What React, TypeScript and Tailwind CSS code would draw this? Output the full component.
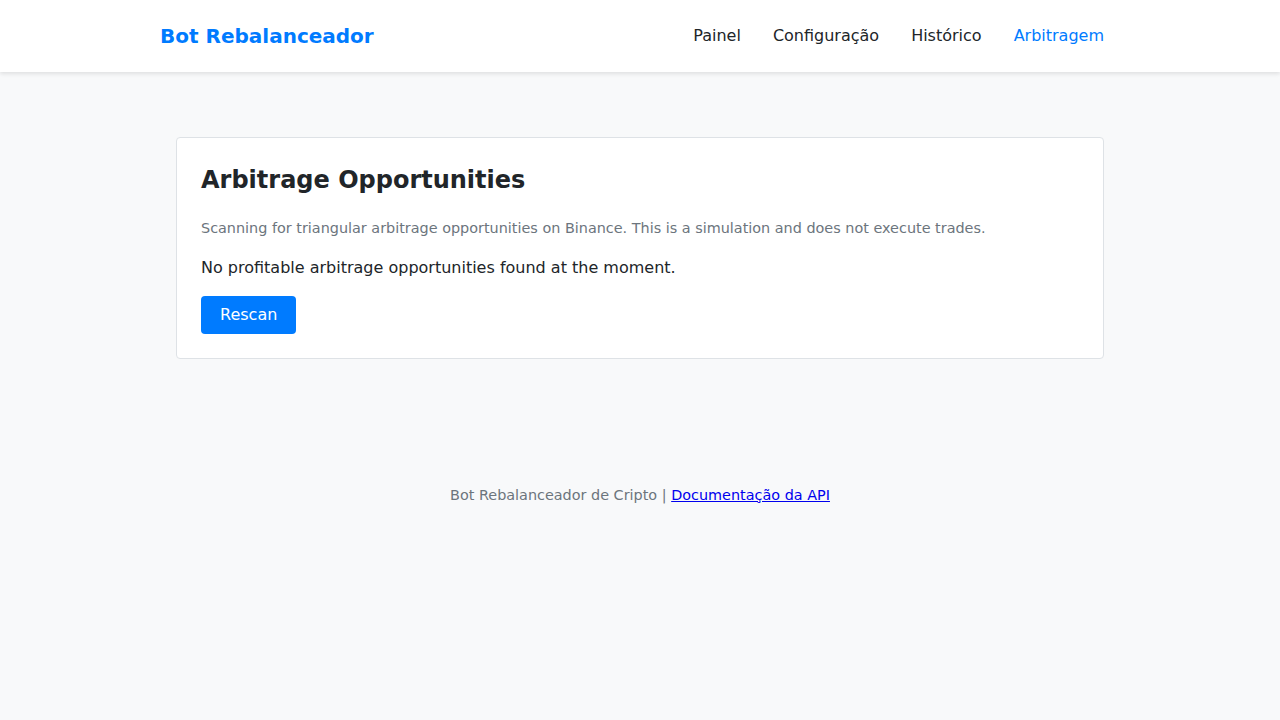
import React from "react";

const links = ["Painel", "Configuração", "Histórico", "Arbitragem"];

const App = () => {
  const [active] = React.useState("Arbitragem");

  return (
    <div className="min-h-[720px] bg-[#f8f9fa] text-[#212529] font-['DejaVu_Sans',sans-serif]">
      <header className="bg-white shadow-[0_2px_4px_rgba(0,0,0,0.1)]">
        <div className="mx-auto flex h-[72px] w-[960px] items-center justify-between">
          <a href="#" className="text-[20px] font-bold text-[#007bff]">
            Bot Rebalanceador
          </a>
          <nav className="flex">
            {links.map((l) => (
              <a
                key={l}
                href="#"
                className={`px-4 text-[16px] ${
                  l === active ? "text-[#007bff]" : "text-[#212529]"
                }`}
              >
                {l}
              </a>
            ))}
          </nav>
        </div>
      </header>

      <main className="mx-auto w-[960px] px-4 pt-[65px]">
        <div className="rounded border border-[#dee2e6] bg-white p-6">
          <h1 className="text-[24px] font-bold leading-[1.5]">Arbitrage Opportunities</h1>
          <p className="mt-5 text-[14.4px] leading-[1.5] text-[#6c757d]">
            Scanning for triangular arbitrage opportunities on Binance. This is a simulation and
            does not execute trades.
          </p>
          <p className="mt-4 text-[16px] leading-[1.5]">
            No profitable arbitrage opportunities found at the moment.
          </p>
          <button className="mt-4 h-[38px] rounded bg-[#007bff] px-[19px] text-[16px] text-white">
            Rescan
          </button>
        </div>
      </main>

      <footer className="pt-[126px] text-center text-[14.4px] text-[#6c757d]">
        Bot Rebalanceador de Cripto |{" "}
        <a href="#" className="text-[#0000ee] underline">
          Documentação da API
        </a>
      </footer>
    </div>
  );
};

export default App;
